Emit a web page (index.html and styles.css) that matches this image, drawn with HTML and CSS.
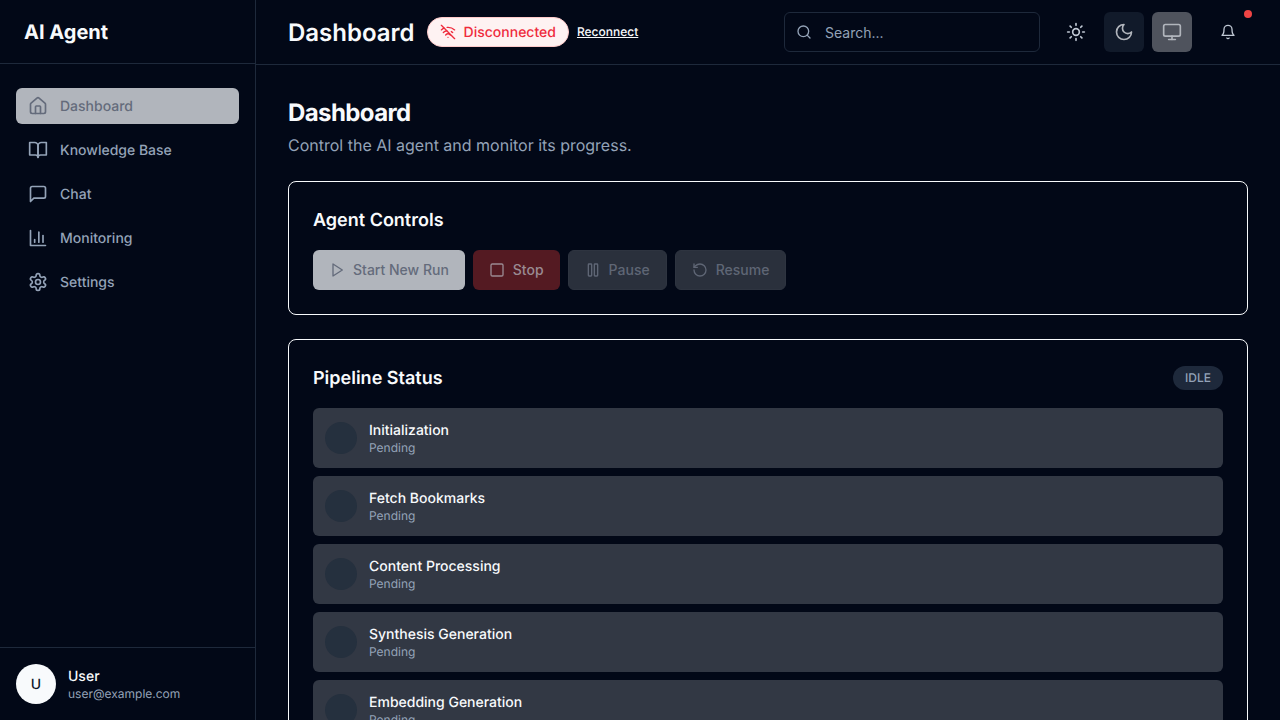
FILE: index.html
```html
<!DOCTYPE html>
<html lang="en">
<head>
    <meta charset="UTF-8">
    <meta name="viewport" content="width=device-width, initial-scale=1.0">
    <title>AI Agent Dashboard</title>
    <link rel="stylesheet" href="styles.css">
</head>
<body>
    <svg class="sprite" xmlns="http://www.w3.org/2000/svg">
        <symbol id="i-home" viewBox="0 0 24 24"><path d="M15 21v-8a1 1 0 0 0-1-1h-4a1 1 0 0 0-1 1v8"/><path d="M3 10a2 2 0 0 1 .709-1.528l7-5.999a2 2 0 0 1 2.582 0l7 5.999A2 2 0 0 1 21 10v9a2 2 0 0 1-2 2H5a2 2 0 0 1-2-2z"/></symbol>
        <symbol id="i-book" viewBox="0 0 24 24"><path d="M2 3h6a4 4 0 0 1 4 4v14a3 3 0 0 0-3-3H2z"/><path d="M22 3h-6a4 4 0 0 0-4 4v14a3 3 0 0 1 3-3h7z"/></symbol>
        <symbol id="i-chat" viewBox="0 0 24 24"><path d="M21 15a2 2 0 0 1-2 2H7l-4 4V5a2 2 0 0 1 2-2h14a2 2 0 0 1 2 2z"/></symbol>
        <symbol id="i-chart" viewBox="0 0 24 24"><path d="M3 3v18h18"/><path d="M18 17V9"/><path d="M13 17V5"/><path d="M8 17v-3"/></symbol>
        <symbol id="i-gear" viewBox="0 0 24 24"><path d="M12.22 2h-.44a2 2 0 0 0-2 2v.18a2 2 0 0 1-1 1.73l-.43.25a2 2 0 0 1-2 0l-.15-.08a2 2 0 0 0-2.73.73l-.22.38a2 2 0 0 0 .73 2.73l.15.1a2 2 0 0 1 1 1.72v.51a2 2 0 0 1-1 1.74l-.15.09a2 2 0 0 0-.73 2.73l.22.38a2 2 0 0 0 2.73.73l.15-.08a2 2 0 0 1 2 0l.43.25a2 2 0 0 1 1 1.73V20a2 2 0 0 0 2 2h.44a2 2 0 0 0 2-2v-.18a2 2 0 0 1 1-1.73l.43-.25a2 2 0 0 1 2 0l.15.08a2 2 0 0 0 2.73-.73l.22-.39a2 2 0 0 0-.73-2.73l-.15-.08a2 2 0 0 1-1-1.74v-.5a2 2 0 0 1 1-1.74l.15-.09a2 2 0 0 0 .73-2.73l-.22-.38a2 2 0 0 0-2.73-.73l-.15.08a2 2 0 0 1-2 0l-.43-.25a2 2 0 0 1-1-1.73V4a2 2 0 0 0-2-2z"/><circle cx="12" cy="12" r="3"/></symbol>
        <symbol id="i-wifi-off" viewBox="0 0 24 24"><path d="M12 20h.01"/><path d="M8.5 16.429a5 5 0 0 1 7 0"/><path d="M5 12.859a10 10 0 0 1 5.17-2.69"/><path d="M19 12.859a10 10 0 0 0-2.007-1.523"/><path d="M2 8.82a15 15 0 0 1 4.177-2.643"/><path d="M22 8.82a15 15 0 0 0-11.288-3.764"/><path d="m2 2 20 20"/></symbol>
        <symbol id="i-search" viewBox="0 0 24 24"><circle cx="11" cy="11" r="8"/><path d="m21 21-4.3-4.3"/></symbol>
        <symbol id="i-sun" viewBox="0 0 24 24"><circle cx="12" cy="12" r="4"/><path d="M12 2v2"/><path d="M12 20v2"/><path d="m4.93 4.93 1.41 1.41"/><path d="m17.66 17.66 1.41 1.41"/><path d="M2 12h2"/><path d="M20 12h2"/><path d="m6.34 17.66-1.41 1.41"/><path d="m19.07 4.93-1.41 1.41"/></symbol>
        <symbol id="i-moon" viewBox="0 0 24 24"><path d="M12 3a6 6 0 0 0 9 9 9 9 0 1 1-9-9Z"/></symbol>
        <symbol id="i-monitor" viewBox="0 0 24 24"><rect width="20" height="14" x="2" y="3" rx="2"/><path d="M8 21h8"/><path d="M12 17v4"/></symbol>
        <symbol id="i-bell" viewBox="0 0 24 24"><path d="M6 8a6 6 0 0 1 12 0c0 7 3 9 3 9H3s3-2 3-9"/><path d="M10.3 21a1.94 1.94 0 0 0 3.4 0"/></symbol>
        <symbol id="i-play" viewBox="0 0 24 24"><polygon points="6 3 20 12 6 21 6 3"/></symbol>
        <symbol id="i-stop" viewBox="0 0 24 24"><rect width="18" height="18" x="3" y="3" rx="2"/></symbol>
        <symbol id="i-pause" viewBox="0 0 24 24"><rect width="5" height="18" x="14" y="3" rx="1"/><rect width="5" height="18" x="5" y="3" rx="1"/></symbol>
        <symbol id="i-resume" viewBox="0 0 24 24"><path d="M3 12a9 9 0 1 0 9-9 9.75 9.75 0 0 0-6.74 2.74L3 8"/><path d="M3 3v5h5"/></symbol>
    </svg>

    <div class="app">
        <aside class="sidebar">
            <div class="logo">AI Agent</div>
            <nav class="nav">
                <a class="nav-item active" href="#"><svg class="icon-20"><use href="#i-home"/></svg>Dashboard</a>
                <a class="nav-item" href="#"><svg class="icon-20"><use href="#i-book"/></svg>Knowledge Base</a>
                <a class="nav-item" href="#"><svg class="icon-20"><use href="#i-chat"/></svg>Chat</a>
                <a class="nav-item" href="#"><svg class="icon-20"><use href="#i-chart"/></svg>Monitoring</a>
                <a class="nav-item" href="#"><svg class="icon-20"><use href="#i-gear"/></svg>Settings</a>
            </nav>
            <div class="user">
                <div class="avatar">U</div>
                <div>
                    <div class="user-name">User</div>
                    <div class="user-email">user@example.com</div>
                </div>
            </div>
        </aside>

        <div class="content">
            <header class="topbar">
                <div class="topbar-title">Dashboard</div>
                <div class="conn-badge"><svg class="icon-16"><use href="#i-wifi-off"/></svg>Disconnected</div>
                <a class="reconnect" href="#">Reconnect</a>
                <div class="topbar-right">
                    <div class="search">
                        <svg class="icon-16"><use href="#i-search"/></svg>
                        <input class="search-input" type="text" placeholder="Search...">
                    </div>
                    <div class="theme-buttons">
                        <button class="icon-btn" type="button"><svg class="icon-20"><use href="#i-sun"/></svg></button>
                        <button class="icon-btn btn-moon" type="button"><svg class="icon-20"><use href="#i-moon"/></svg></button>
                        <button class="icon-btn btn-monitor" type="button"><svg class="icon-20"><use href="#i-monitor"/></svg></button>
                    </div>
                    <button class="icon-btn btn-bell" type="button">
                        <svg class="icon-16"><use href="#i-bell"/></svg>
                        <span class="bell-dot"></span>
                    </button>
                </div>
            </header>

            <main class="main">
                <h1>Dashboard</h1>
                <p class="subtitle">Control the AI agent and monitor its progress.</p>

                <section class="card">
                    <h2>Agent Controls</h2>
                    <div class="controls">
                        <button class="btn btn-start" type="button"><svg class="icon-16"><use href="#i-play"/></svg><span class="btn-label">Start New Run</span></button>
                        <button class="btn btn-stop" type="button"><svg class="icon-16"><use href="#i-stop"/></svg><span class="btn-label">Stop</span></button>
                        <button class="btn btn-muted" type="button"><svg class="icon-16"><use href="#i-pause"/></svg><span class="btn-label">Pause</span></button>
                        <button class="btn btn-muted" type="button"><svg class="icon-16"><use href="#i-resume"/></svg><span class="btn-label">Resume</span></button>
                    </div>
                </section>

                <section class="card">
                    <div class="card-head">
                        <h2>Pipeline Status</h2>
                        <span class="status-pill">IDLE</span>
                    </div>
                    <div class="steps">
                        <div class="step"><div class="step-dot"></div><div><div class="step-name">Initialization</div><div class="step-state">Pending</div></div></div>
                        <div class="step"><div class="step-dot"></div><div><div class="step-name">Fetch Bookmarks</div><div class="step-state">Pending</div></div></div>
                        <div class="step"><div class="step-dot"></div><div><div class="step-name">Content Processing</div><div class="step-state">Pending</div></div></div>
                        <div class="step"><div class="step-dot"></div><div><div class="step-name">Synthesis Generation</div><div class="step-state">Pending</div></div></div>
                        <div class="step"><div class="step-dot"></div><div><div class="step-name">Embedding Generation</div><div class="step-state">Pending</div></div></div>
                    </div>
                </section>
            </main>
        </div>
    </div>
</body>
</html>
```
FILE: styles.css
```css
* {
    box-sizing: border-box;
}

body {
    margin: 0;
    height: 720px;
    overflow: hidden;
    background-color: #020817;
    color: #f8fafc;
    font-family: Inter, "Liberation Sans", sans-serif;
    text-rendering: geometricPrecision;
}

.sprite {
    display: none;
}

.icon-16,
.icon-20 {
    flex-shrink: 0;
    fill: none;
    stroke: currentColor;
    stroke-width: 2;
    stroke-linecap: round;
    stroke-linejoin: round;
}

.icon-16 {
    width: 16px;
    height: 16px;
}

.icon-20 {
    width: 20px;
    height: 20px;
}

.app {
    display: flex;
    height: 720px;
}

/* sidebar */
.sidebar {
    display: flex;
    flex-direction: column;
    flex-shrink: 0;
    width: 256px;
    border-right: 1px solid #1e293b;
}

.logo {
    height: 64px;
    padding: 1px 24px 0;
    border-bottom: 1px solid #1e293b;
    font-size: 20px;
    font-weight: 700;
    line-height: 62px;
}

.nav {
    display: flex;
    flex: 1;
    flex-direction: column;
    gap: 8px;
    padding: 24px 16px;
}

.nav-item {
    display: flex;
    align-items: center;
    gap: 12px;
    height: 36px;
    padding: 0 12px;
    border-radius: 6px;
    color: #94a3b8;
    font-size: 14px;
    font-weight: 500;
    text-decoration: none;
}

.nav-item.active {
    background-color: #b1b5bc;
    color: #646b7b;
}

.user {
    display: flex;
    align-items: center;
    gap: 12px;
    padding: 16px;
    border-top: 1px solid #1e293b;
}

.avatar {
    display: flex;
    align-items: center;
    justify-content: center;
    width: 40px;
    height: 40px;
    border-radius: 50%;
    background-color: #f8fafc;
    color: #0f172a;
    font-size: 14px;
    font-weight: 500;
}

.user-name {
    margin-bottom: -1px;
    padding-top: 1px;
    font-size: 14px;
    font-weight: 500;
    line-height: 20px;
}

.user-email {
    color: #94a3b8;
    font-size: 12px;
    line-height: 16px;
}

/* top bar */
.content {
    display: flex;
    flex: 1;
    flex-direction: column;
    min-width: 0;
}

.topbar {
    display: flex;
    flex-shrink: 0;
    align-items: center;
    height: 65px;
    padding: 0 32px;
    border-bottom: 1px solid #1e293b;
}

.topbar-title {
    margin-right: 12px;
    font-size: 24px;
    font-weight: 600;
}

.conn-badge {
    display: flex;
    align-items: center;
    gap: 8px;
    height: 30px;
    padding: 0 12px;
    border: 1px solid #fecaca;
    border-radius: 15px;
    background-color: #fef2f2;
    color: #ef2b3c;
    font-size: 14px;
    font-weight: 500;
}

.reconnect {
    margin-left: 8px;
    padding-bottom: 2px;
    color: #f8fafc;
    font-size: 12px;
    font-weight: 500;
}

.topbar-right {
    display: flex;
    align-items: center;
    gap: 16px;
    margin-left: auto;
}

.search {
    display: flex;
    align-items: center;
    gap: 13px;
    width: 256px;
    height: 40px;
    padding: 0 12px 0 11px;
    border: 1px solid #1e293b;
    border-radius: 6px;
    color: #94a3b8;
}

.search-input {
    flex: 1;
    min-width: 0;
    padding: 0;
    border: none;
    outline: none;
    background: transparent;
    color: #f8fafc;
    font-family: inherit;
    font-size: 14px;
}

.search-input::placeholder {
    color: #94a3b8;
    opacity: 1;
}

.theme-buttons {
    display: flex;
    gap: 8px;
}

.icon-btn {
    position: relative;
    display: flex;
    align-items: center;
    justify-content: center;
    width: 40px;
    height: 40px;
    padding: 0;
    border: none;
    border-radius: 6px;
    background: transparent;
    color: #c0c8d4;
}

.btn-moon {
    background-color: #111a2a;
    color: #b1b5bc;
}

.btn-monitor {
    background-color: #4f535d;
    color: #b1b5bc;
}

.bell-dot {
    position: absolute;
    top: -2px;
    right: -4px;
    width: 8px;
    height: 8px;
    border-radius: 50%;
    background-color: #ef4444;
}

/* main */
.main {
    flex: 1;
    overflow: hidden;
    padding: 32px;
}

h1 {
    margin: 0;
    font-size: 24px;
    font-weight: 700;
    letter-spacing: -0.025em;
    line-height: 32px;
}

.subtitle {
    margin: 4px 0 24px;
    color: #94a3b8;
    font-size: 16px;
    line-height: 24px;
}

.card {
    margin-bottom: 24px;
    padding: 24px;
    border: 1px solid #f8fafc;
    border-radius: 8px;
}

h2 {
    margin: 0 0 15px;
    padding-top: 1px;
    font-size: 18px;
    font-weight: 600;
    line-height: 28px;
}

.controls {
    display: flex;
    gap: 8px;
}

.btn {
    display: flex;
    align-items: center;
    gap: 8px;
    height: 40px;
    padding: 0 16px;
    border: none;
    border-radius: 6px;
    font-family: inherit;
    font-size: 14px;
    font-weight: 500;
}

.btn-label {
    padding-bottom: 2px;
}

.btn-start {
    background-color: #b1b5bc;
    color: #646b7b;
}

.btn-stop {
    background-color: #541a22;
    color: #9a8a92;
}

.btn-muted {
    border: 1px solid #2e3440;
    background-color: #2a303c;
    color: #5f6675;
}

.card-head {
    display: flex;
    align-items: flex-start;
    justify-content: space-between;
}

.status-pill {
    margin-top: 2px;
    padding: 4px 12px;
    border-radius: 12px;
    background-color: #1e293b;
    color: #94a3b8;
    font-size: 12px;
    font-weight: 500;
    line-height: 16px;
}

.steps {
    display: flex;
    flex-direction: column;
    gap: 8px;
}

.step {
    display: flex;
    align-items: center;
    gap: 12px;
    height: 60px;
    padding: 12px;
    border-radius: 6px;
    background-color: #323844;
}

.step-dot {
    flex-shrink: 0;
    width: 32px;
    height: 32px;
    border-radius: 50%;
    background-color: #25303e;
}

.step-name {
    margin-bottom: -1px;
    padding-top: 1px;
    font-size: 14px;
    font-weight: 500;
    line-height: 20px;
}

.step-state {
    color: #94a3b8;
    font-size: 12px;
    line-height: 16px;
}
```
